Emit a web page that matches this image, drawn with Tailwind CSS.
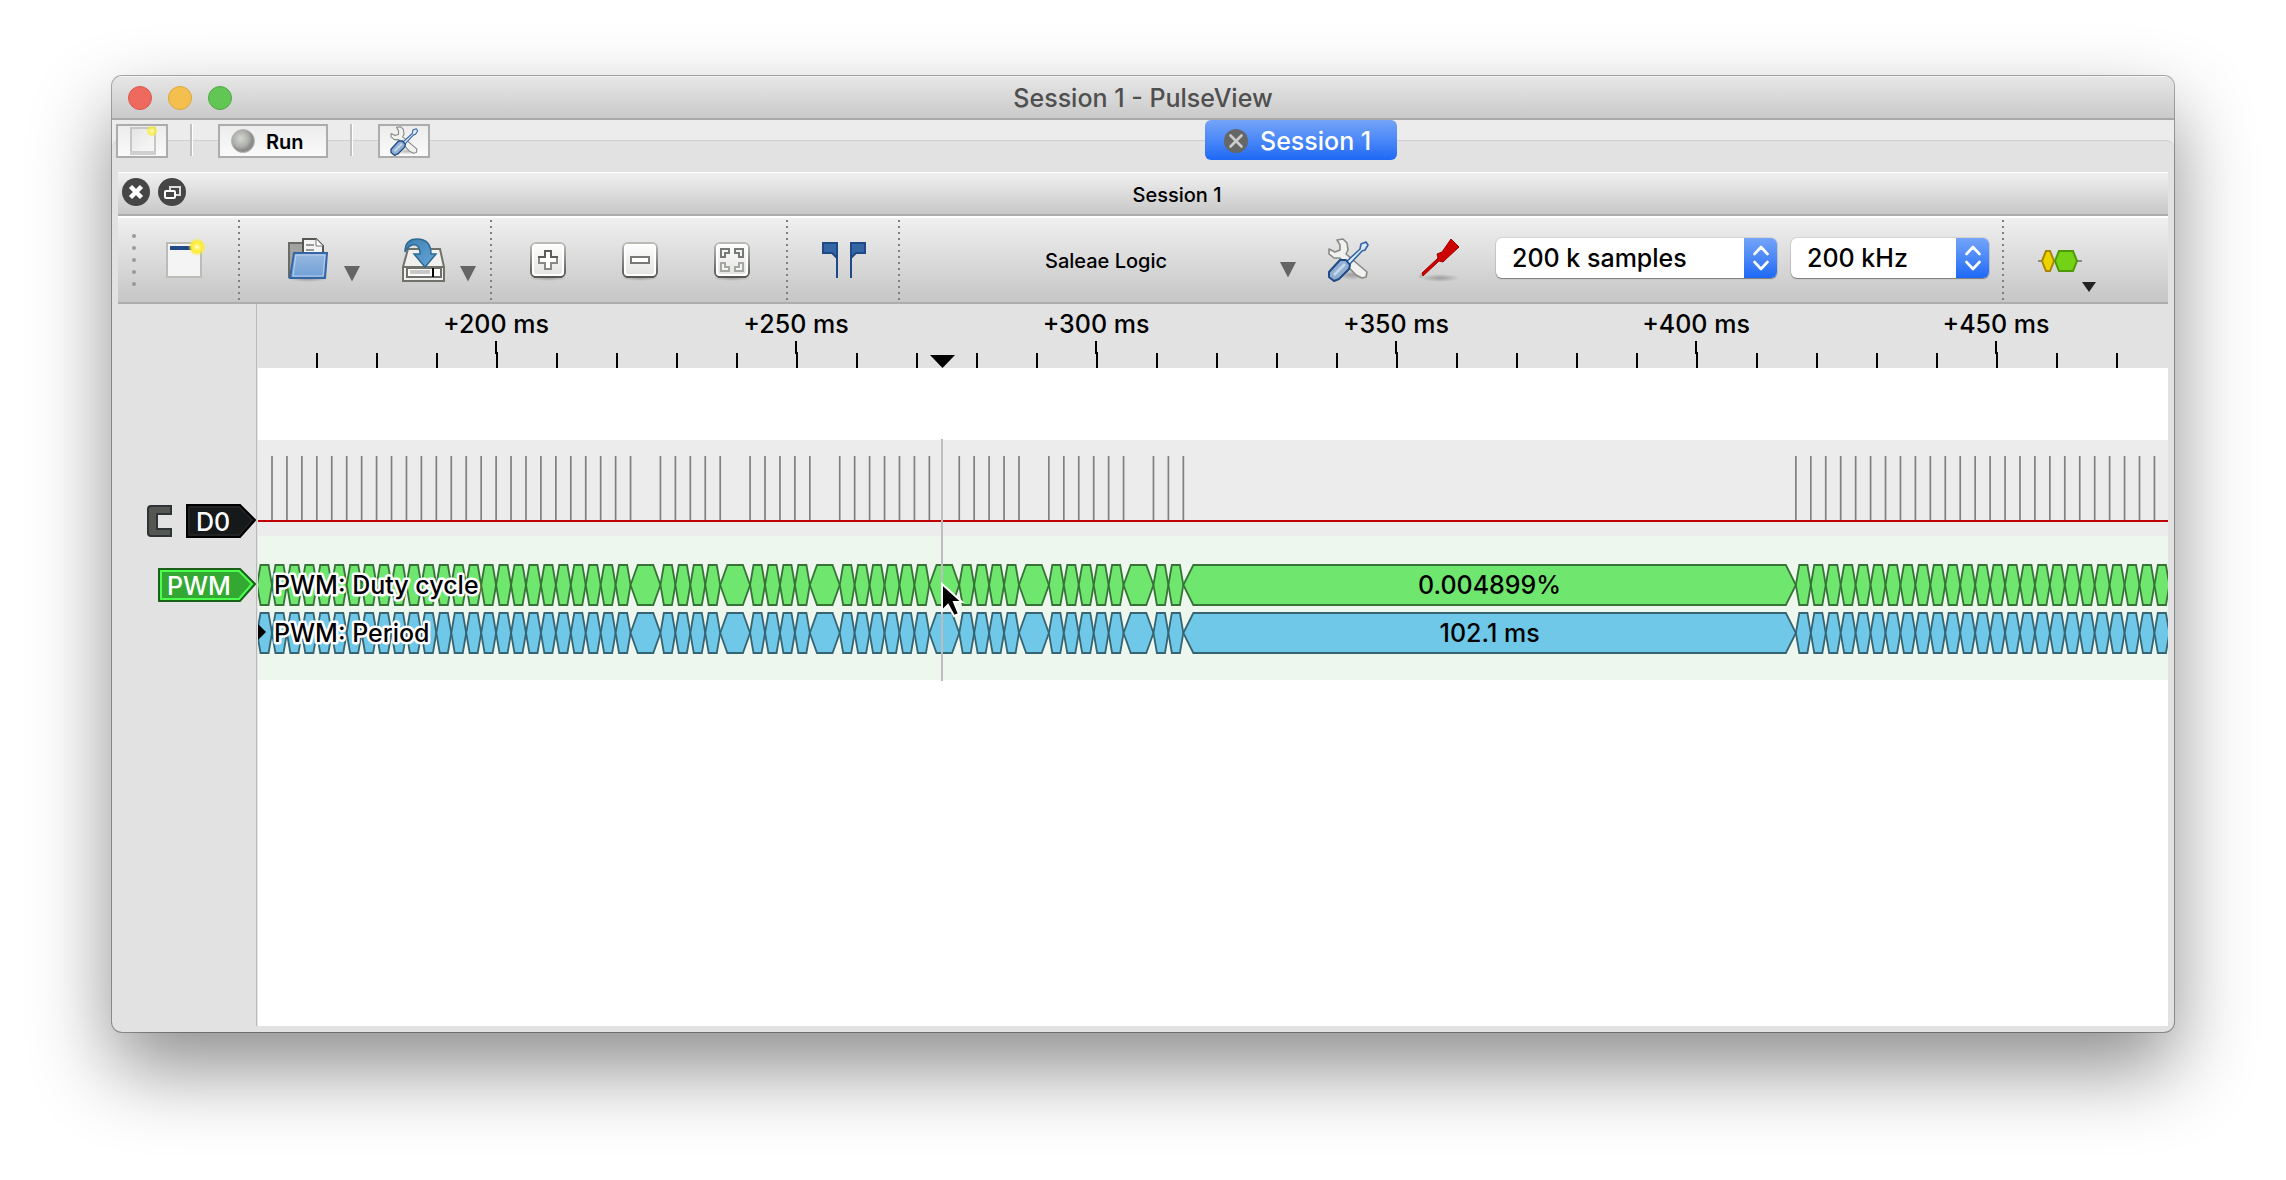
<!DOCTYPE html>
<html lang="en">
<head>
<meta charset="utf-8">
<title>Session 1 - PulseView</title>
<script src="https://cdn.jsdelivr.net/npm/@tailwindcss/browser@4"></script>
</head>
<body class="min-h-screen bg-white flex flex-col font-[Inter,Roboto,sans-serif] font-medium text-black">
<svg class="absolute size-0" aria-hidden="true">
  <defs>
    <linearGradient id="metal" x1="0" y1="0" x2="0" y2="1"><stop offset="0" stop-color="#fff"/><stop offset="1" stop-color="#e2e2e0"/></linearGradient>
    <linearGradient id="rim" x1="0" y1="0" x2="0" y2="1"><stop offset="0" stop-color="#babdb6"/><stop offset="1" stop-color="#555753"/></linearGradient>
    <linearGradient id="folder" x1="0" y1="0" x2="0" y2="1"><stop offset="0" stop-color="#98b9e2"/><stop offset="1" stop-color="#6f9fd4"/></linearGradient>
    <linearGradient id="arrowblue" x1="0" y1="0" x2="1" y2="1"><stop offset="0" stop-color="#3f7fb0"/><stop offset="1" stop-color="#64a7da"/></linearGradient>
    <linearGradient id="paper" x1="0" y1="0" x2="1" y2="1"><stop offset="0" stop-color="#e4e4e4"/><stop offset="1" stop-color="#fafafa"/></linearGradient>
    <radialGradient id="glow"><stop offset="0" stop-color="#fffde0"/><stop offset=".25" stop-color="#fff27a"/><stop offset=".6" stop-color="#fcee2a"/><stop offset="1" stop-color="#fcee2a" stop-opacity="0"/></radialGradient>
    <radialGradient id="ball" cx=".4" cy=".4"><stop offset="0" stop-color="#d3d7cf"/><stop offset=".7" stop-color="#adafaa"/><stop offset="1" stop-color="#8c8d8a"/></radialGradient>
    <radialGradient id="shade"><stop offset="0" stop-color="#000" stop-opacity=".25"/><stop offset="1" stop-color="#000" stop-opacity="0"/></radialGradient>
    <symbol id="tools" viewBox="0 0 44 44">
      <ellipse cx="26" cy="37" rx="17" ry="5" fill="url(#shade)"/>
      <path d="M11 2 L17 1 L21 5 L22 12 L20 16 L41 34 L40 39 L36 40 L30 37 L14 20 L8 20 L3 16 L3 11 L9 14 L14 12 L14 7 Z" fill="#f1f1ef" stroke="#888a85" stroke-width="1.6" stroke-linejoin="round"/>
      <path d="M20 24 L34 11 L35 6 L40 4 L42 7 L39 12 L36 13 L23 27 Z" fill="#dce8f6" stroke="#3465a4" stroke-width="1.6" stroke-linejoin="round"/>
      <path d="M14 22 L20 22 L24 27 L23 31 L13 41 L8 43 L3 39 L3 34 Z" fill="#8faed0" stroke="#204a87" stroke-width="2" stroke-linejoin="round"/>
      <path d="M8 37 L19 26" stroke="#c3d5ea" stroke-width="3"/>
    </symbol>
    <symbol id="keycap" viewBox="0 0 44 44">
      <ellipse cx="22" cy="40" rx="19" ry="3" fill="url(#shade)"/>
      <rect x="5" y="5" width="34" height="34" rx="5" fill="url(#metal)" stroke="url(#rim)" stroke-width="2"/>
      <rect x="7" y="7" width="30" height="30" rx="3" fill="none" stroke="#fff" stroke-width="2"/>
      <path d="M8 39H36" stroke="#555753" stroke-width="2"/>
    </symbol>
    <symbol id="down" viewBox="0 0 16 16"><path d="M0 0H16L8 15.500Z" fill="#656565"/></symbol>
    <symbol id="updown" viewBox="0 0 16 26"><path d="M1.500 9 L8 2 L14.500 9 M1.500 17 L8 24 L14.500 17" fill="none" stroke="#fff" stroke-width="2.600" stroke-linecap="round" stroke-linejoin="round"/></symbol>
  </defs>
</svg>

<main class="mx-28 mt-[76px] mb-[148px] flex-1 flex flex-col rounded-[10px] overflow-hidden bg-[#e2e2e2] shadow-[0_0_0_1px_rgba(0,0,0,0.32),0_36px_80px_rgba(0,0,0,0.45)]">
  <header class="relative h-11 flex items-center px-4 bg-linear-to-b from-[#e6e6e6] to-[#cacaca] border-t border-t-[#f5f5f5] border-b-2 border-b-[#a9a9a9]">
    <div class="flex gap-4">
      <button aria-label="Close" class="size-6 rounded-full bg-[#ee6a5f] border border-[#d9594f]"></button>
      <button aria-label="Minimize" class="size-6 rounded-full bg-[#f5bf4f] border border-[#dba63c]"></button>
      <button aria-label="Zoom" class="size-6 rounded-full bg-[#61c654] border border-[#51a845]"></button>
    </div>
    <h1 class="absolute inset-x-0 text-center text-[25px] leading-8 text-[#4f4f4f] pointer-events-none">Session 1 - PulseView</h1>
  </header>

  <div class="relative h-13 bg-[#ececec]">
    <div class="absolute inset-x-0 top-5 bottom-0 rounded-t-lg border-t border-[#cfcfcf] bg-[#e2e2e2]"></div>
    <div class="relative flex items-start pl-1">
      <button aria-label="New session" class="mt-1 w-13 h-[34px] border-2 border-[#acacac] bg-linear-to-b from-[#ececec] to-[#fafafa] flex justify-center items-center">
        <svg class="w-8 h-[30px]" viewBox="0 0 32 30"><rect x="5" y="2" width="24" height="26" fill="url(#paper)" stroke="#c6c6c4" stroke-width="2"/><path d="M4 27H30" stroke="#cfcfcd" stroke-width="4"/><circle cx="26" cy="5" r="6" fill="url(#glow)" opacity=".8"/></svg>
      </button>
      <div class="mt-1 ml-[22px] w-[3px] h-8 bg-[#c0c0c0] border-r border-white"></div>
      <button class="mt-1 ml-[25px] w-[110px] h-[34px] border-2 border-[#acacac] bg-linear-to-b from-[#ececec] to-[#fafafa] flex items-center pl-[11px] gap-[11px] text-[20px] leading-6 font-semibold">
        <svg class="size-6" viewBox="0 0 24 24"><circle cx="12" cy="12" r="11.500" fill="url(#ball)" stroke="#b5b5b5"/></svg><span class="pt-0.5">Run</span>
      </button>
      <div class="mt-1 ml-[22px] w-[3px] h-8 bg-[#c0c0c0] border-r border-white"></div>
      <button aria-label="Settings" class="mt-1 ml-[25px] w-13 h-[34px] border-2 border-[#acacac] bg-linear-to-b from-[#ececec] to-[#fafafa] flex justify-center items-center">
        <svg class="size-[30px]"><use href="#tools"/></svg>
      </button>
      <nav class="flex-1 flex justify-center pr-0.5">
        <a href="#session" class="w-48 h-10 rounded-md bg-linear-to-b from-[#74a4f8] to-[#1c68f6] flex items-center pt-0.5 pl-[19px] gap-3 text-[25px] leading-8 text-white">
          <svg class="size-6" viewBox="0 0 24 24"><circle cx="12" cy="12" r="12" fill="#666"/><path d="M6.500 6.500L17.500 17.500M17.500 6.500L6.500 17.500" stroke="#ccc" stroke-width="2.600" stroke-linecap="round"/></svg>Session 1
        </a>
      </nav>
    </div>
  </div>

  <section id="session" class="mx-1.5 mb-1.5 flex-1 flex flex-col">
    <div class="relative h-11 flex items-center pl-1 pb-1 gap-2 bg-linear-to-b from-[#f0f0f0] to-[#c8c8c8] border-t border-t-white border-b-2 border-b-[#acacac]">
      <button aria-label="Close session"><svg class="size-7" viewBox="0 0 28 28"><circle cx="14" cy="14" r="14" fill="#464646"/><path d="M8.500 8.500L19.500 19.500M19.500 8.500L8.500 19.500" stroke="#fff" stroke-width="4.500"/></svg></button>
      <button aria-label="Float session"><svg class="size-7" viewBox="0 0 28 28"><circle cx="14" cy="14" r="14" fill="#464646"/><path d="M12 12V9H22V17H18" fill="none" stroke="#ddd" stroke-width="2"/><rect x="7" y="13" width="10" height="7" rx="1" fill="#464646" stroke="#fff" stroke-width="2"/></svg></button>
      <h2 class="flex-1 pr-2 pt-1.5 text-center text-[20px] leading-6 font-medium">Session 1</h2>
    </div>

    <div class="h-22 flex items-center pl-3.5 bg-linear-to-b from-[#f0f0f0] to-[#c6c6c6] border-t-2 border-t-white border-b-2 border-b-[#acacac] *:shrink-0">
      <div class="flex flex-col gap-2"><i class="size-1 rounded-full bg-[#999]"></i><i class="size-1 rounded-full bg-[#999]"></i><i class="size-1 rounded-full bg-[#999]"></i><i class="size-1 rounded-full bg-[#999]"></i><i class="size-1 rounded-full bg-[#999]"></i></div>
      <button aria-label="New view" class="ml-[26px]"><svg class="size-11" viewBox="0 0 44 44"><rect x="5" y="5" width="34" height="34" fill="#f4f4f4" stroke="#babdb6" stroke-width="2"/><path d="M8 10H34" stroke="#204a87" stroke-width="4"/><circle cx="35" cy="9" r="9" fill="url(#glow)"/></svg></button>
      <div class="ml-8 w-0.5 h-20 bg-[repeating-linear-gradient(#808080_0_2px,transparent_2px_6px)]"></div>
      <button aria-label="Open" class="ml-[46px]"><svg class="size-11" viewBox="0 0 44 44"><ellipse cx="22" cy="41" rx="20" ry="3" fill="url(#shade)"/><path d="M3 39V5H18V39Z" fill="#a2a2a0" stroke="#6a6a68" stroke-width="2"/><path d="M17 20V1H30L37 8V20Z" fill="#f4f4f4" stroke="#555753" stroke-width="2"/><path d="M30 1V8H37" fill="#fff" stroke="#777" stroke-width="1"/><path d="M20 7H28M20 12H28" stroke="#999" stroke-width="2"/><path d="M8 15H41L39 40H4Z" fill="url(#folder)" stroke="#3465a4" stroke-width="2"/><path d="M10 17H39L37 38H7Z" fill="none" stroke="#b7cfec" stroke-width="1"/></svg></button>
      <button aria-label="Open menu" class="ml-3.5 mt-7"><svg class="size-4"><use href="#down"/></svg></button>
      <button aria-label="Save" class="ml-[42px]"><svg class="size-11" viewBox="0 0 44 44"><path d="M6 11H38L42 29V43H1V29Z" fill="#f0f0ee" stroke="#6f716b" stroke-width="2"/><path d="M1 29H42" stroke="#6f716b" stroke-width="2"/><rect x="5" y="30" width="34" height="9" fill="#fff" stroke="#6f716b" stroke-width="2"/><path d="M8 34H28" stroke="#c8c8c8" stroke-width="4"/><path d="M31 30V39" stroke="#000" stroke-width="2"/><path d="M3 14C3 5 8 1 15 1C24 1 29 6 29 16H34L23 29L12 16H18C18 9 15 6 10 7C7 8 5 10 3 14Z" fill="url(#arrowblue)" stroke="#2e6a94" stroke-width="1.500"/></svg></button>
      <button aria-label="Save menu" class="ml-3.5 mt-7"><svg class="size-4"><use href="#down"/></svg></button>
      <div class="ml-3.5 w-0.5 h-20 bg-[repeating-linear-gradient(#808080_0_2px,transparent_2px_6px)]"></div>
      <button aria-label="Zoom in" class="ml-[34px]"><svg class="size-11" viewBox="0 0 44 44"><use href="#keycap"/><path d="M19 13H25V19H31V25H25V31H19V25H13V19H19Z" fill="#fff" stroke="#888a85" stroke-width="2"/><path d="M13 20V19H19V13H25V19H31V20" fill="none" stroke="#5c5e5a" stroke-width="2"/></svg></button>
      <button aria-label="Zoom out" class="ml-12"><svg class="size-11" viewBox="0 0 44 44"><use href="#keycap"/><rect x="13" y="19" width="18" height="6" fill="#fff" stroke="#777974" stroke-width="2"/></svg></button>
      <button aria-label="Zoom to fit" class="ml-12"><svg class="size-11" viewBox="0 0 44 44"><use href="#keycap"/><g fill="#f4f4f4" stroke-width="2"><path stroke="#777974" d="M11 11H19V15H15V19H11Z M33 11H25V15H29V19H33Z"/><path stroke="#a5a7a2" d="M11 33H19V29H15V25H11Z M33 33H25V29H29V25H33Z"/></g></svg></button>
      <div class="ml-8 w-0.5 h-20 bg-[repeating-linear-gradient(#808080_0_2px,transparent_2px_6px)]"></div>
      <button aria-label="Show cursors" class="ml-[34px]"><svg class="size-11" viewBox="0 0 44 44" fill="#3465a4" stroke="#204a87" stroke-width="2"><path d="M15 40V5H1V15H10L15 20"/><path d="M29 40V5H43V15H34L29 20"/></svg></button>
      <div class="ml-8 w-0.5 h-20 bg-[repeating-linear-gradient(#808080_0_2px,transparent_2px_6px)]"></div>
      <button class="relative w-[412px] h-20 pt-0.5 text-center text-[20px] leading-6">Saleae Logic<svg class="absolute right-4 top-[42px] size-4"><use href="#down"/></svg></button>
      <button aria-label="Configure device" class="ml-3.5"><svg class="size-11"><use href="#tools"/></svg></button>
      <button aria-label="Configure channels" class="ml-12"><svg class="size-11" viewBox="0 0 44 44"><ellipse cx="22" cy="40" rx="20" ry="4" fill="url(#shade)"/><path d="M2 40L4 36" stroke="#babdb6" stroke-width="3"/><path d="M4 35L20 20L19 16L24 14L33 1L41 9L27 22L25 24L21 23L5 38Z" fill="#c00" stroke="#a40000" stroke-width="1"/></svg></button>
      <div class="relative ml-[34px] mb-1 w-[281px] h-10">
        <select aria-label="Sample count" class="appearance-none size-full rounded-md bg-white pl-4 text-[25px] leading-8 shadow-[0_1px_1px_rgba(0,0,0,0.35),0_0_0_1px_rgba(0,0,0,0.08)]"><option>200 k samples</option></select>
        <span class="absolute inset-y-0 right-0 w-[33px] rounded-r-md bg-linear-to-b from-[#74a4f8] to-[#1c68f6] flex items-center justify-center pointer-events-none"><svg class="w-4 h-[26px]"><use href="#updown"/></svg></span>
      </div>
      <div class="relative ml-3.5 mb-1 w-[198px] h-10">
        <select aria-label="Sample rate" class="appearance-none size-full rounded-md bg-white pl-4 text-[25px] leading-8 shadow-[0_1px_1px_rgba(0,0,0,0.35),0_0_0_1px_rgba(0,0,0,0.08)]"><option>200 kHz</option></select>
        <span class="absolute inset-y-0 right-0 w-[33px] rounded-r-md bg-linear-to-b from-[#74a4f8] to-[#1c68f6] flex items-center justify-center pointer-events-none"><svg class="w-4 h-[26px]"><use href="#updown"/></svg></span>
      </div>
      <div class="ml-[13px] w-0.5 h-20 bg-[repeating-linear-gradient(#808080_0_2px,transparent_2px_6px)]"></div>
      <button aria-label="Add protocol decoder" class="ml-[34px] flex items-center">
        <svg class="w-[60px] h-11" viewBox="0 0 60 44"><path d="M0 23H44" stroke="#888a85" stroke-width="2"/><path d="M8 13H12L16 23L12 33H8L4 23Z" fill="#edd400" stroke="#a88600" stroke-width="2"/><path d="M21 13H35L39 23L35 33H21L17 23Z" fill="#73d216" stroke="#4e9a06" stroke-width="2"/></svg>
        <svg class="-ml-4 mt-[54px] w-3.5 h-2.5" viewBox="0 0 14 10"><path d="M0 0H14L7 10Z" fill="#222"/></svg>
      </button>
    </div>

    <div class="flex-1 flex">
      <aside class="w-[139px] border-r border-[#bbb]">
        <svg class="w-full h-[400px]" viewBox="0 0 138 400" preserveAspectRatio="xMinYMin" font-size="25" fill="#fff">
          <path d="M53 202H33Q30 202 30 205V229Q30 232 33 232H53V225H39V210H53Z" fill="#555753" stroke="#2e3436" stroke-width="2"/>
          <path d="M69 201H122L137 216L122 233H69Z" fill="#16191a" stroke="#000" stroke-width="2"/>
          <path d="M71 203H121L134 216L121 231H71Z" fill="none" stroke="#2a2d2e" stroke-width="1"/>
          <text x="78" y="227">D0</text>
          <path d="M41 265H122L137 280L122 297H41Z" fill="#33a933" stroke="#1a611a" stroke-width="2"/>
          <path d="M43 267H121L134 280L121 295H43Z" fill="none" stroke="#4dff4d" stroke-width="2"/>
          <text x="49" y="291">PWM</text>
        </svg>
      </aside>
      <div class="ml-px flex-1 min-w-0 flex flex-col">
        <svg id="ruler" class="w-full h-16" font-size="25"></svg>
        <div class="flex-1 bg-white">
          <svg id="trace" class="w-full h-[320px]" font-size="25"></svg>
        </div>
      </div>
    </div>
  </section>
</main>

<script>
// Time ruler: a major tick every 50 ms (300 px), four minor ticks between.
let r = '';
for (let k = -3; k < 28; k++) {
  const x = 239 + 60 * k;
  if (k % 5 === 0) {
    r += `<path d="M${x - 1} 37V49H${x}V64" fill="none" stroke="#000" stroke-width="2"/>`;
    r += `<text x="${x - 1}" y="29" text-anchor="middle">+${200 + k * 10} ms</text>`;
  } else {
    r += `<path d="M${x} 49V64" stroke="#000" stroke-width="2"/>`;
  }
}
r += '<path d="M672 51H697L684.500 64Z"/>';
document.getElementById('ruler').innerHTML = r;

// Pulse slots at 2.5 ms pitch, as [first, last] runs.
const runs = [[-1, 24], [26, 30], [32, 36], [38, 44], [46, 50], [52, 57], [59, 61], [102, 128]];
const xs = runs.flatMap(([a, b]) => Array.from({ length: b - a + 1 }, (_, i) => 14 + (a + i) * 14.94));
let t = '<rect y="72" width="100%" height="96" fill="#ececec"/><rect y="168" width="100%" height="144" fill="#edf7ee"/>';
t += xs.slice(1).map(x => `<path d="M${x} 88V152" stroke="#808080" stroke-width="1.7"/>`).join('');
t += '<rect y="152" width="100%" height="2" fill="#c00000"/>';
const hex = (y, fill, stroke) => xs.slice(0, -1).map((a, i) => {
  const b = xs[i + 1], d = Math.min(10, (b - a) / 4 - 0.3);
  return `<path d="M${a} ${y}L${a + d} ${y - 20}H${b - d}L${b} ${y}L${b - d} ${y + 20}H${a + d}Z" fill="${fill}" stroke="${stroke}" stroke-width="1.8"/>`;
}).join('');
t += hex(217, '#6fe76f', '#377337') + hex(265, '#6fc8e7', '#376473');
const mid = (14 + 61 * 14.94 + 14 + 102 * 14.94) / 2;
t += `<text x="${mid}" y="226" text-anchor="middle">0.004899%</text><text x="${mid}" y="274" text-anchor="middle">102.1 ms</text>`;
t += '<g stroke="#fff" stroke-width="5" stroke-linejoin="round" paint-order="stroke"><text x="16" y="226">PWM: Duty cycle</text><text x="16" y="274">PWM: Period</text></g>';
t += '<path d="M0 256L8 264L0 272Z"/>';
t += '<path d="M684 71V313" stroke="#bdbdbd" stroke-width="2"/>';
t += '<path d="M684 216V243L690 237L696 248L701 246L696 234H704Z" fill="#000" stroke="#fff" stroke-width="2"/>';
document.getElementById('trace').innerHTML = t;
</script>
</body>
</html>
